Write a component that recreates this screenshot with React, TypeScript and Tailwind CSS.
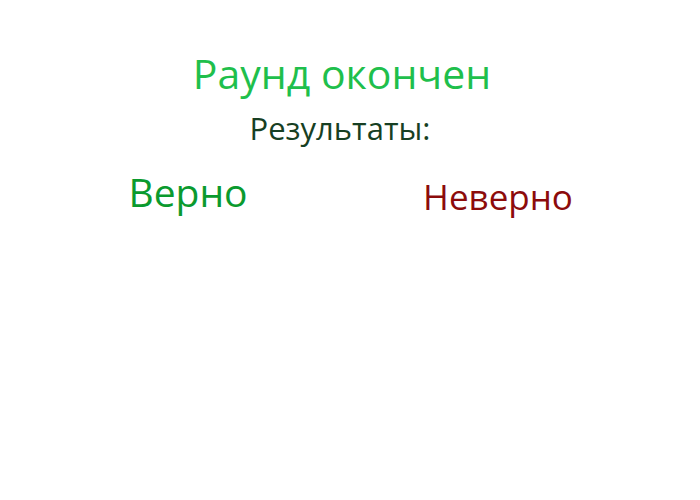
export default function App() {
  return (
    <div className="w-[700px] h-[500px] bg-white font-['Open_Sans','Noto_Sans',sans-serif]">
      <div className="flex flex-col items-center pt-[47px]">
        <h1 className="pr-[16px] text-[41px] leading-[52px] text-[#1fbf4c]">Раунд окончен</h1>
        <h2 className="mt-[11px] pr-[20px] text-[31px] leading-[36px] text-[#173f23]">Результаты:</h2>
      </div>
      <div className="flex mt-[23px]">
        <div className="w-[376px] flex justify-center">
          <span className="text-[39px] leading-[46px] text-[#0a9a2e]">Верно</span>
        </div>
        <div className="w-[244px] flex justify-center pt-[5px]">
          <span className="text-[35px] leading-[46px] text-[#8c0b0b]">Неверно</span>
        </div>
      </div>
    </div>
  );
}
